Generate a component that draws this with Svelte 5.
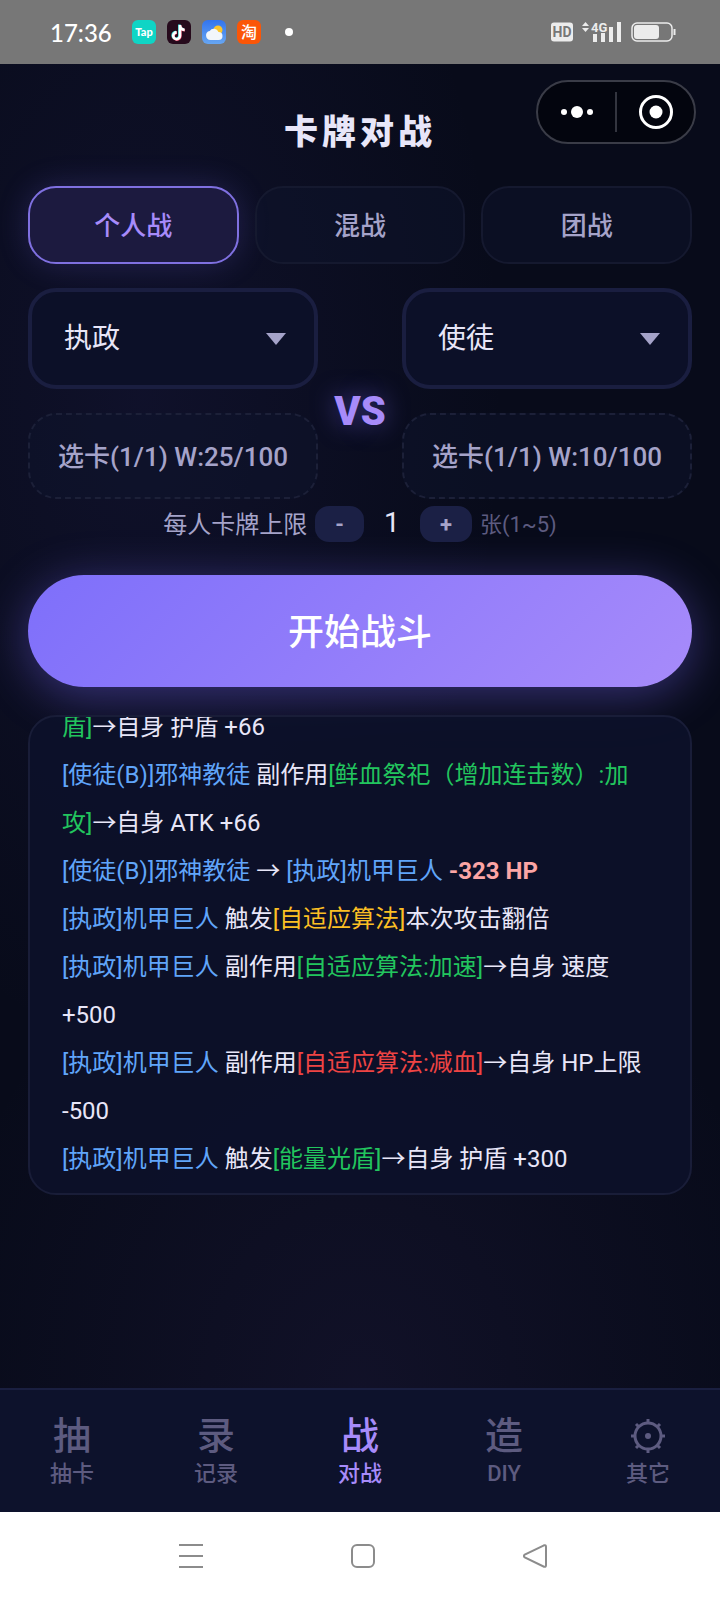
<script>
  const modes = ['个人战', '混战', '团战'];
  const factions = ['执政', '使徒'];

  const tabs = [
    { icon: '抽', label: '抽卡' },
    { icon: '录', label: '记录' },
    { icon: '战', label: '对战' },
    { icon: '造', label: 'DIY' },
    { icon: 'gear', label: '其它' }
  ];

  // Each line is a list of [text, type] parts
  const log = [
    [['盾]', 'buff'], ['→自身 护盾 +66']],
    [['[使徒(B)]邪神教徒', 'name'], [' 副作用'], ['[鲜血祭祀（增加连击数）:加攻]', 'buff'], ['→自身 ATK +66']],
    [['[使徒(B)]邪神教徒', 'name'], [' → '], ['[执政]机甲巨人', 'name'], [' '], ['-323 HP', 'damage']],
    [['[执政]机甲巨人', 'name'], [' 触发'], ['[自适应算法]', 'skill'], ['本次攻击翻倍']],
    [['[执政]机甲巨人', 'name'], [' 副作用'], ['[自适应算法:加速]', 'buff'], ['→自身 速度 +500']],
    [['[执政]机甲巨人', 'name'], [' 副作用'], ['[自适应算法:减血]', 'debuff'], ['→自身 HP上限 -500']],
    [['[执政]机甲巨人', 'name'], [' 触发'], ['[能量光盾]', 'buff'], ['→自身 护盾 +300']]
  ];

  let mode = $state('个人战');
  let activeTab = $state('对战');
  let limit = $state(1);
  let sides = $state([
    { faction: '执政', weight: 25 },
    { faction: '使徒', weight: 10 }
  ]);

  function changeLimit(step) {
    limit = Math.min(5, Math.max(1, limit + step));
  }
</script>

{#snippet sidePanel(side)}
  <div class="side">
    <div class="select-box">
      <select bind:value={side.faction} aria-label={side.faction}>
        {#each factions as name}
          <option value={name}>{name}</option>
        {/each}
      </select>
      <svg class="arrow" width="20" height="12" viewBox="0 0 20 12"><path d="M0 0h20L10 12z" fill="#a5a3c9" /></svg>
    </div>
    <button class="pick">选卡(1/1) W:{side.weight}/100</button>
  </div>
{/snippet}

<div class="page">
  <div class="status">
    <span class="time">17:36</span>
    <div class="apps">
      <svg width="24" height="24" viewBox="0 0 24 24">
        <rect width="24" height="24" rx="6" fill="#0fd5c5" />
        <text x="12" y="16" text-anchor="middle" font-size="11" font-weight="900" font-family="Lato, sans-serif" fill="#fff">Tap</text>
      </svg>
      <svg width="24" height="24" viewBox="0 0 24 24">
        <rect width="24" height="24" rx="6" fill="#260a1c" />
        <g fill="none" stroke-width="2.6">
          <path d="M12.4 4.6v10.8a3.4 3.4 0 1 1-3.4-3.4M12.4 5c.3 2.7 2 4.3 4.6 4.5" stroke="#36e5e3" />
          <path d="M13.4 5.4v10.8a3.4 3.4 0 1 1-3.4-3.4M13.4 5.8c.3 2.7 2 4.3 4.6 4.5" stroke="#f04a6c" />
          <path d="M13 5v10.8a3.4 3.4 0 1 1-3.4-3.4M13 5.4c.3 2.7 2 4.3 4.6 4.5" stroke="#fff" />
        </g>
      </svg>
      <svg width="24" height="24" viewBox="0 0 24 24">
        <defs>
          <linearGradient id="sky" x1="0" y1="0" x2="0" y2="1">
            <stop offset="0" stop-color="#3274ee" />
            <stop offset="1" stop-color="#67a6f2" />
          </linearGradient>
        </defs>
        <rect width="24" height="24" rx="6" fill="url(#sky)" />
        <circle cx="16" cy="10" r="4.5" fill="#fcc52c" />
        <path d="M8.5 20a4.600 4.600 0 0 1-.8-9.100 5 5 0 0 1 8.800 1.100 4 4 0 0 1 0 8z" fill="#f2f6fb" />
      </svg>
      <svg width="24" height="24" viewBox="0 0 24 24">
        <rect width="24" height="24" rx="6" fill="#fb5607" />
        <text x="12" y="18" text-anchor="middle" font-size="16" font-weight="500" font-family="'Noto Sans CJK SC', sans-serif" fill="#fff">淘</text>
      </svg>
    </div>
    <span class="dot"></span>
    <div class="signals">
      <svg width="22" height="20" viewBox="0 0 22 20">
        <rect width="22" height="19" y="0.5" rx="3" fill="#ececec" />
        <text x="11" y="15" text-anchor="middle" font-size="14" font-weight="700" font-family="Roboto, sans-serif" fill="#777">HD</text>
      </svg>
      <svg width="40" height="24" viewBox="0 0 40 24">
        <path d="M0 6 3.5 2 7 6zM0 8h7L3.500 12z" fill="#ececec" />
        <text x="9" y="12" font-size="13" font-weight="700" font-family="Roboto, sans-serif" fill="#ececec">4G</text>
        <path d="M11 14h4v8h-4zM19 13h4v9h-4zM27 7h4v15h-4zM35 2h4v20h-4z" fill="#ececec" />
      </svg>
      <svg width="45" height="20" viewBox="0 0 45 20">
        <rect x="1" y="1" width="40" height="18" rx="5" fill="none" stroke="#ececec" stroke-width="1.5" />
        <rect x="3" y="3" width="25" height="14" rx="3" fill="#ececec" />
        <path d="M43.5 7v6" stroke="#ececec" stroke-width="2" />
      </svg>
    </div>
  </div>

  <main>
    <header>
      <h1>卡牌对战</h1>
      <div class="capsule">
        <button aria-label="更多">
          <svg width="36" height="36" viewBox="0 0 36 36" fill="#fff">
            <circle cx="5" cy="18" r="3" /><circle cx="18" cy="18" r="6" /><circle cx="31" cy="18" r="3" />
          </svg>
        </button>
        <span class="divider"></span>
        <button aria-label="关闭">
          <svg width="36" height="36" viewBox="0 0 36 36">
            <circle cx="18" cy="18" r="15.5" fill="none" stroke="#fff" stroke-width="3" />
            <circle cx="18" cy="18" r="6.5" fill="#fff" />
          </svg>
        </button>
      </div>
    </header>

    <div class="modes">
      {#each modes as name}
        <button class:active={mode === name} onclick={() => (mode = name)}>{name}</button>
      {/each}
    </div>

    <section class="versus">
      {@render sidePanel(sides[0])}
      <div class="vs">VS</div>
      {@render sidePanel(sides[1])}
    </section>

    <div class="limit">
      <span>每人卡牌上限</span>
      <button onclick={() => changeLimit(-1)}>-</button>
      <output>{limit}</output>
      <button onclick={() => changeLimit(1)}>+</button>
      <span class="hint">张(1~5)</span>
    </div>

    <button class="start">开始战斗</button>

    <section class="log">
      {#each log as line}
        <p>{#each line as [text, type]}{#if type}<span class={type}>{text}</span>{:else}{text}{/if}{/each}</p>
      {/each}
    </section>
  </main>

  <nav class="tabbar">
    {#each tabs as tab}
      <button class:active={activeTab === tab.label} onclick={() => (activeTab = tab.label)}>
        <span class="icon">
          {#if tab.icon === 'gear'}
            <svg width="36" height="36" viewBox="0 0 36 36" fill="none" stroke="currentColor" stroke-width="3">
              <circle cx="18" cy="18" r="13" />
              <circle cx="18" cy="18" r="3" fill="currentColor" stroke="none" />
              <path d="M18 1v4M18 31v4M1 18h4M31 18h4M6 6l3 3M27 27l3 3M6 30l3-3M27 9l3-3" />
            </svg>
          {:else}
            {tab.icon}
          {/if}
        </span>
        <span>{tab.label}</span>
      </button>
    {/each}
  </nav>

  <div class="system">
    <button aria-label="菜单">
      <svg width="24" height="24" viewBox="0 0 24 24"><path d="M0 1h24M0 12h24M0 23h24" /></svg>
    </button>
    <button aria-label="主页">
      <svg width="24" height="24" viewBox="0 0 24 24"><rect x="1" y="1" width="22" height="22" rx="5" /></svg>
    </button>
    <button aria-label="返回">
      <svg width="24" height="24" viewBox="0 0 24 24"><path d="M21 1.3 1.8 10.6q-1.7 1.4 0 2.8L21 22.7q2 .6 2-1.5V2.8q0-2.1-2-1.5z" /></svg>
    </button>
  </div>
</div>

<style>
  :global(body) {
    margin: 0;
    background: #080b1a;
  }

  .page {
    min-height: 100vh;
    display: flex;
    flex-direction: column;
    font-family: Roboto, 'Noto Sans CJK SC', sans-serif;
    color: #e8e6f8;
  }

  button,
  select {
    font-family: inherit;
    color: inherit;
    border: none;
    background: none;
    margin: 0;
    padding: 0;
    cursor: pointer;
  }

  svg {
    display: block;
  }

  .status {
    height: 64px;
    box-sizing: border-box;
    padding: 0 44px 0 50px;
    display: flex;
    align-items: center;
    background: #777;
    color: #fff;
  }

  .time {
    font-family: Lato, sans-serif;
    font-size: 24px;
    font-weight: 500;
    margin-right: 20px;
  }

  .apps {
    display: flex;
    gap: 11px;
  }

  .dot {
    width: 8px;
    height: 8px;
    border-radius: 50%;
    background: #fff;
    margin-left: 24px;
  }

  .signals {
    margin-left: auto;
    display: flex;
    align-items: center;
    gap: 9px;
  }

  main {
    flex: 1;
    padding-bottom: 32px;
    background:
      radial-gradient(ellipse 50% 50% at 20% 25%, rgba(70, 60, 160, 0.12), transparent),
      radial-gradient(ellipse 60% 40% at 50% 100%, rgba(110, 80, 180, 0.09), transparent),
      #080b1a;
  }

  header {
    display: grid;
    grid-template-columns: 1fr auto 1fr;
    align-items: start;
    padding: 16px 24px 0;
    height: 106px;
  }

  h1 {
    grid-column: 2;
    margin: 0;
    padding-top: 28px;
    font-size: 34px;
    line-height: 48px;
    font-weight: 900;
    letter-spacing: 4px;
  }

  .capsule {
    justify-self: end;
    width: 160px;
    height: 64px;
    box-sizing: border-box;
    border: 2px solid #3a3c47;
    border-radius: 32px;
    background: #03050e;
    display: flex;
    align-items: center;
  }

  .capsule button {
    flex: 1;
    display: flex;
    justify-content: center;
  }

  .divider {
    width: 2px;
    height: 40px;
    background: #33353f;
  }

  .modes {
    display: flex;
    gap: 16px;
    padding: 0 28px;
  }

  .modes button {
    flex: 1;
    height: 78px;
    padding-bottom: 4px;
    border: 2px solid #15192f;
    border-radius: 28px;
    background: rgba(14, 19, 44, 0.5);
    color: #a5a3c9;
    font-size: 26px;
    font-weight: 500;
  }

  .modes button.active {
    border-color: #7f70e0;
    background: #1c1a3f;
    color: #a78bfa;
    box-shadow: 0 0 32px rgba(124, 108, 255, 0.2);
  }

  .versus {
    display: grid;
    grid-template-columns: 1fr 84px 1fr;
    align-items: center;
    padding: 24px 28px 8px;
  }

  .side {
    display: flex;
    flex-direction: column;
    gap: 24px;
  }

  .select-box {
    display: grid;
    align-items: center;
    border: 4px solid #1a1e40;
    border-radius: 28px;
    background: #0c1028;
  }

  .select-box select,
  .arrow {
    grid-area: 1 / 1;
  }

  .select-box select {
    appearance: none;
    width: 100%;
    height: 93px;
    padding: 0 64px 0 32px;
    border-radius: 24px;
    font-size: 28px;
  }

  .select-box option {
    background: #0c1028;
  }

  .arrow {
    justify-self: end;
    margin-right: 28px;
    pointer-events: none;
  }

  .pick {
    height: 86px;
    padding-bottom: 4px;
    border: 2px dashed #1c2038;
    border-radius: 28px;
    background: rgba(14, 19, 44, 0.5);
    color: #a5a3c9;
    font-size: 26px;
    font-weight: 500;
    white-space: nowrap;
  }

  .vs {
    padding-top: 36px;
    text-align: center;
    font-size: 40px;
    font-weight: 900;
    color: #a78bfa;
    text-shadow: 0 0 24px rgba(124, 108, 255, 0.5);
  }

  .limit {
    display: flex;
    justify-content: center;
    align-items: center;
    gap: 8px;
    height: 34px;
    font-size: 24px;
    color: #a5a3c9;
  }

  .limit span,
  .limit output {
    padding-bottom: 4px;
  }

  .limit button {
    height: 36px;
    padding: 0 20px;
    border-radius: 14px;
    background: #1b2045;
    font-size: 22px;
    font-weight: 700;
  }

  .limit output {
    width: 40px;
    text-align: center;
    font-size: 28px;
    color: #e8e6f8;
  }

  .limit .hint {
    font-size: 22px;
    color: #5d5b80;
  }

  .start {
    display: block;
    width: calc(100% - 56px);
    height: 112px;
    margin: 34px 28px 28px;
    padding-bottom: 4px;
    border-radius: 56px;
    background: linear-gradient(135deg, #7e6ffa, #a78bfa);
    box-shadow: 0 8px 48px rgba(124, 108, 255, 0.4);
    color: #fff;
    font-size: 36px;
    font-weight: 500;
  }

  .log {
    display: flex;
    flex-direction: column;
    justify-content: flex-end;
    height: 480px;
    box-sizing: border-box;
    margin: 0 28px;
    padding: 0 32px 10px;
    border: 2px solid #191d38;
    border-radius: 28px;
    background: rgba(13, 17, 42, 0.88);
    overflow: hidden;
    font-size: 24px;
    line-height: 48px;
  }

  .log p {
    margin: 0;
  }

  .name {
    color: #60a5fa;
  }

  .buff {
    color: #22c55e;
  }

  .skill {
    color: #fbbf24;
  }

  .debuff {
    color: #ef4444;
  }

  .damage {
    color: #fca5a5;
    font-weight: 700;
  }

  .tabbar {
    display: flex;
    height: 122px;
    border-top: 2px solid #1a1f40;
    background: #0d122c;
  }

  .tabbar button {
    flex: 1;
    display: flex;
    flex-direction: column;
    align-items: center;
    gap: 2px;
    padding-top: 24px;
    color: #5d5b80;
    font-size: 22px;
    line-height: 28px;
    font-weight: 500;
  }

  .tabbar .icon {
    height: 44px;
    display: flex;
    align-items: center;
    font-size: 38px;
    line-height: 44px;
  }

  .tabbar button.active {
    color: #a78bfa;
  }

  .system {
    display: flex;
    justify-content: center;
    align-items: center;
    gap: 148px;
    height: 88px;
    padding-left: 6px;
    background: #fff;
  }

  .system svg {
    fill: none;
    stroke: #8c8c8c;
    stroke-width: 2;
  }
</style>
